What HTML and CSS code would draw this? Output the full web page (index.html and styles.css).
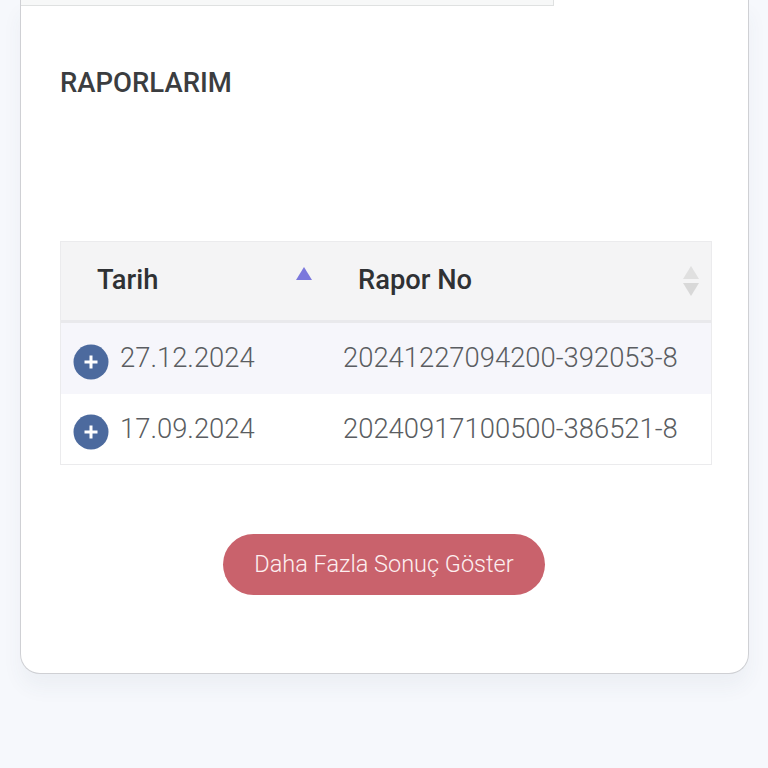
FILE: index.html
```html
<!DOCTYPE html>
<html lang="tr">
<head>
<meta charset="utf-8">
<title>Raporlarım</title>
<link rel="stylesheet" href="styles.css">
</head>
<body>
<main class="card">
  <div class="stub"></div>
  <h2 class="title">RAPORLARIM</h2>
  <div class="table">
    <div class="thead">
      <div class="th th-date">
        <span>Tarih</span>
        <svg class="sort-asc" width="18" height="15" viewBox="0 0 18 15"><path d="M9 1 L17 14 L1 14 Z" fill="#7b78dc"/></svg>
      </div>
      <div class="th th-no">
        <span>Rapor No</span>
        <svg class="sort-both" width="16" height="30" viewBox="0 0 16 30"><path d="M8 0 L16 13 L0 13 Z" fill="#e0e0e0"/><path d="M8 30 L16 17 L0 17 Z" fill="#d8d8d8"/></svg>
      </div>
    </div>
    <div class="row row-odd">
      <div class="td td-date">
        <svg class="plus" width="36" height="36" viewBox="0 0 36 36"><circle cx="18" cy="18" r="17.5" fill="#4c6a9e"/><path d="M18 11.5 V24.5 M11.5 18 H24.5" stroke="#fff" stroke-width="3"/></svg>
        <span>27.12.2024</span>
      </div>
      <div class="td td-no">20241227094200-392053-8</div>
    </div>
    <div class="row">
      <div class="td td-date">
        <svg class="plus" width="36" height="36" viewBox="0 0 36 36"><circle cx="18" cy="18" r="17.5" fill="#4c6a9e"/><path d="M18 11.5 V24.5 M11.5 18 H24.5" stroke="#fff" stroke-width="3"/></svg>
        <span>17.09.2024</span>
      </div>
      <div class="td td-no">20240917100500-386521-8</div>
    </div>
  </div>
  <div class="actions">
    <button class="more" type="button">Daha Fazla Sonuç Göster</button>
  </div>
</main>
</body>
</html>
```
FILE: styles.css
```css
html, body {
  margin: 0;
  padding: 0;
  height: 768px;
  overflow: hidden;
  background: #f6f8fc;
}
body {
  font-family: Roboto, "Liberation Sans", sans-serif;
  padding: 0 19px 0 20px;
  box-sizing: border-box;
}
.card {
  box-sizing: border-box;
  height: 674px;
  background: #fff;
  border: 1px solid #cfd0d4;
  border-top: 0;
  border-radius: 0 0 20px 20px;
  box-shadow: 0 14px 20px rgba(60, 70, 90, 0.05);
  padding: 0 36px 0 39px;
}
.stub {
  width: 533px;
  height: 6px;
  margin-left: -39px;
  box-sizing: border-box;
  background: #f7f8f8;
  border: 1px solid #dfe1e1;
  border-top: 0;
  border-left: 0;
}
.title {
  margin: 61px 0 0;
  font-size: 27.5px;
  line-height: 32px;
  font-weight: 500;
  color: #3b3d40;
}
.table {
  margin-top: 142px;
  border: 1px solid #ebebed;
}
.thead {
  display: flex;
  height: 78px;
  background: #f4f4f5;
  border-bottom: 3px solid #e9e9ec;
}
.th {
  display: flex;
  align-items: center;
  box-sizing: border-box;
  font-size: 27.3px;
  font-weight: 500;
  color: #2f3134;
}
.th span {
  margin-top: -3px;
}
.th-date {
  width: 261px;
  padding-left: 36px;
  position: relative;
}
.th-no {
  flex: 1;
  padding-left: 36px;
  position: relative;
}
.sort-asc {
  position: absolute;
  left: 234px;
  top: 24px;
}
.sort-both {
  position: absolute;
  right: 12px;
  top: 24px;
}
.row {
  display: flex;
  align-items: center;
  height: 71px;
  font-size: 27.4px;
  font-weight: 300;
  color: #5a5d61;
}
.row + .row {
  height: 70px;
}
.row-odd {
  background: #f6f6fb;
}
.td-date {
  width: 282px;
  display: flex;
  align-items: center;
  box-sizing: border-box;
  padding-left: 12px;
}
.plus {
  margin: 6px 11px 0 0;
  flex: none;
}
.td-date span {
  margin-top: -1px;
}
.td-no {
  margin-top: -1px;
  white-space: nowrap;
}
.actions {
  display: flex;
  justify-content: center;
  margin-top: 69px;
  padding-right: 5px;
}
.more {
  width: 322px;
  height: 61px;
  padding: 0 0 1px 1px;
  border: 0;
  border-radius: 31px;
  background: #c9626c;
  color: #fdeff0;
  font-family: inherit;
  font-size: 23.5px;
  font-weight: 300;
}
```
